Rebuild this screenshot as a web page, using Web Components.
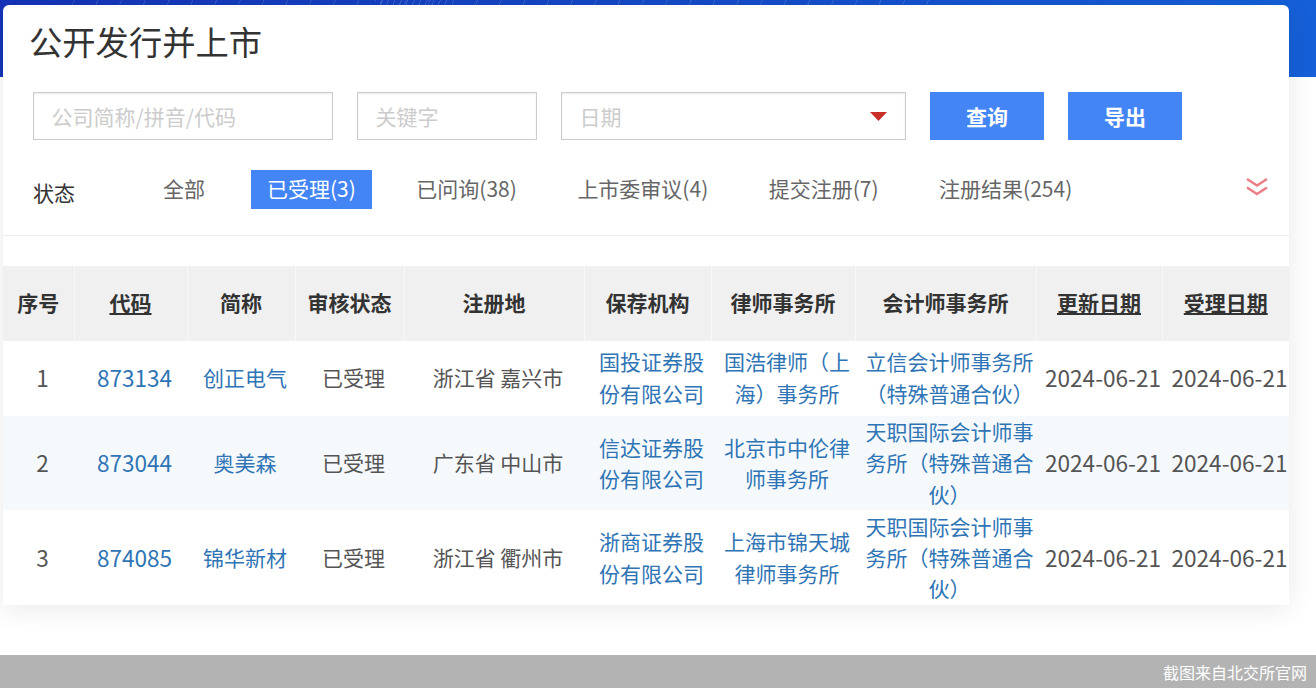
<!DOCTYPE html>
<html lang="zh-CN"><head><meta charset="utf-8">
<style>
html,body{margin:0;padding:0;background:#fff}
body{font-family:"Noto Sans CJK SC","Noto Sans",sans-serif;color:#555;width:1316px;height:688px;overflow:hidden}
</style></head>
<body>
<ipo-page>
  <ipo-card>
    <ipo-title>公开发行并上市</ipo-title>
    <ipo-filters></ipo-filters>
    <ipo-status></ipo-status>
    <ipo-table></ipo-table>
  </ipo-card>
</ipo-page>
<ipo-footer>截图来自北交所官网</ipo-footer>
<script>
function el(name,css,html){
  customElements.define(name,class extends HTMLElement{
    constructor(){super();this.attachShadow({mode:'open'}).innerHTML='<style>'+css+'</style>'+html}
  });
}
el('ipo-page',`:host{display:block;height:655px;padding-top:5px;box-sizing:border-box;
  background:
   repeating-linear-gradient(112deg,rgba(255,255,255,.16) 0 1px,transparent 1px 6px) 375px 0/75px 5px no-repeat,
   repeating-linear-gradient(112deg,rgba(255,255,255,.13) 0 1px,transparent 1px 22px) 50px 0/900px 5px no-repeat,
   linear-gradient(90deg,#1533b8,#1560d8) 0 0/100% 77px no-repeat}`,`<slot></slot>`);
el('ipo-card',`:host{display:block;width:1286px;height:600px;margin-left:3px;background:#fff;border-radius:6px 6px 0 0;box-shadow:0 4px 28px rgba(0,0,0,.09)}`,`<slot></slot>`);
el('ipo-title',`:host{display:block;font-size:33.3px;line-height:40px;padding:16px 0 0 26px;color:#333}`,`<slot></slot>`);
el('ipo-field',`:host{display:flex;align-items:center;height:48px;box-sizing:border-box;border:1px solid #ccc;box-shadow:inset 0 1px 2px rgba(0,0,0,.08);padding:0 18px 0 17.5px;font-size:21px;color:#ccc;white-space:nowrap}
 span{flex:1}`,`<span><slot></slot></span><slot name="end"></slot>`);
el('ipo-button',`:host{display:flex;align-items:center;justify-content:center;width:114px;height:48px;background:#4485f5;color:#fff;font-size:21px;font-weight:700}`,`<slot></slot>`);
el('ipo-filters',`:host{display:flex;gap:24px;padding:31px 0 0 30px}
 ipo-field:nth-of-type(1){width:300px} ipo-field:nth-of-type(2){width:180px} ipo-field:nth-of-type(3){width:345px}
 svg{display:block}`,
 `<ipo-field>公司简称/拼音/代码</ipo-field><ipo-field>关键字</ipo-field>
  <ipo-field>日期<svg slot="end" width="17" height="9" viewBox="0 0 17 9"><path d="M0 0H17L8.5 9Z" fill="#c9302c"/></svg></ipo-field>
  <ipo-button>查询</ipo-button><ipo-button>导出</ipo-button>`);
el('ipo-status',`:host{display:flex;align-items:flex-start;height:96px;box-sizing:border-box;padding:30px 0 0 30px;border-bottom:1px solid #eee;font-size:21px;position:relative}
 .label{width:114px;color:#333;line-height:39px;margin-top:3px}
 .tabs{display:flex}
 .t{height:39px;line-height:37px;padding:0 16px;margin-right:28.5px;white-space:nowrap;color:#666}
 .t:first-child{margin-right:30px}
 .t.on{background:#4485f5;color:#fff}
 svg{position:absolute;left:1242px;top:37px}`,
 `<div class="label">状态</div><div class="tabs"><div class="t">全部</div><div class="t on">已受理(3)</div><div class="t">已问询(38)</div><div class="t">上市委审议(4)</div><div class="t">提交注册(7)</div><div class="t">注册结果(254)</div></div>
 <svg width="24" height="20" viewBox="0 0 24 20" fill="none" stroke="#ea7f86" stroke-width="2.6"><path d="M2 2L12 8.5L22 2M2 10.5L12 17L22 10.5"/></svg>`);
const rows=[
 ['1','873134','创正电气','已受理','浙江省 嘉兴市','国投证券股份有限公司','国浩律师（上海）事务所','立信会计师事务所（特殊普通合伙）','2024-06-21','2024-06-21'],
 ['2','873044','奥美森','已受理','广东省 中山市','信达证券股份有限公司','北京市中伦律师事务所','天职国际会计师事务所（特殊普通合伙）','2024-06-21','2024-06-21'],
 ['3','874085','锦华新材','已受理','浙江省 衢州市','浙商证券股份有限公司','上海市锦天城律师事务所','天职国际会计师事务所（特殊普通合伙）','2024-06-21','2024-06-21']];
const heads=['序号','<u>代码</u>','简称','审核状态','注册地','保荐机构','律师事务所','会计师事务所','<u>更新日期</u>','<u>受理日期</u>'];
const widths=[71,113,108,109,180,127,144,181,126,127];
const links=new Set([1,2,5,6,7]);
const nums=new Set([0,1,8,9]);
el('ipo-table',`:host{display:block;margin-top:30px;font-size:21px}
 table{border-collapse:collapse;table-layout:fixed;width:1286px}
 th{height:75px;background:#f0f0f0;color:#333;font-weight:700;padding:0 0 3px;box-sizing:border-box;border-right:1px solid #f8f8f8}
 th:last-child{border-right:0}
 td{height:75px;padding:0 0 2px 8px;box-sizing:border-box;text-align:center;line-height:31.3px;color:#555;word-break:break-all}
 td.nw{white-space:nowrap}
 td.n{font-size:22.6px}
 td.l{color:#2f75b5}
 tr.a td,tr.b td{padding-bottom:0}
 tr.a td{height:94px}
 tr.b td{height:95px}
 tr.a{background:#f5f9fc}`,
 `<table><colgroup>${widths.map(w=>`<col style="width:${w}px">`).join('')}</colgroup>
 <thead><tr>${heads.map(h=>`<th>${h}</th>`).join('')}</tr></thead>
 <tbody>${rows.map((r,i)=>`<tr class="${i?(i==1?'a':'b'):''}">${r.map((c,j)=>`<td class="${links.has(j)?'l ':''}${j<5||j>7?'nw ':''}${nums.has(j)?'n':''}">${c}</td>`).join('')}</tr>`).join('')}</tbody></table>`);
el('ipo-footer',`:host{display:flex;justify-content:flex-end;align-items:center;height:33px;background:#b3b3b3;color:#fff;font-size:16px;padding-right:9px;box-sizing:border-box}`,`<slot></slot>`);
</script>
</body></html>
